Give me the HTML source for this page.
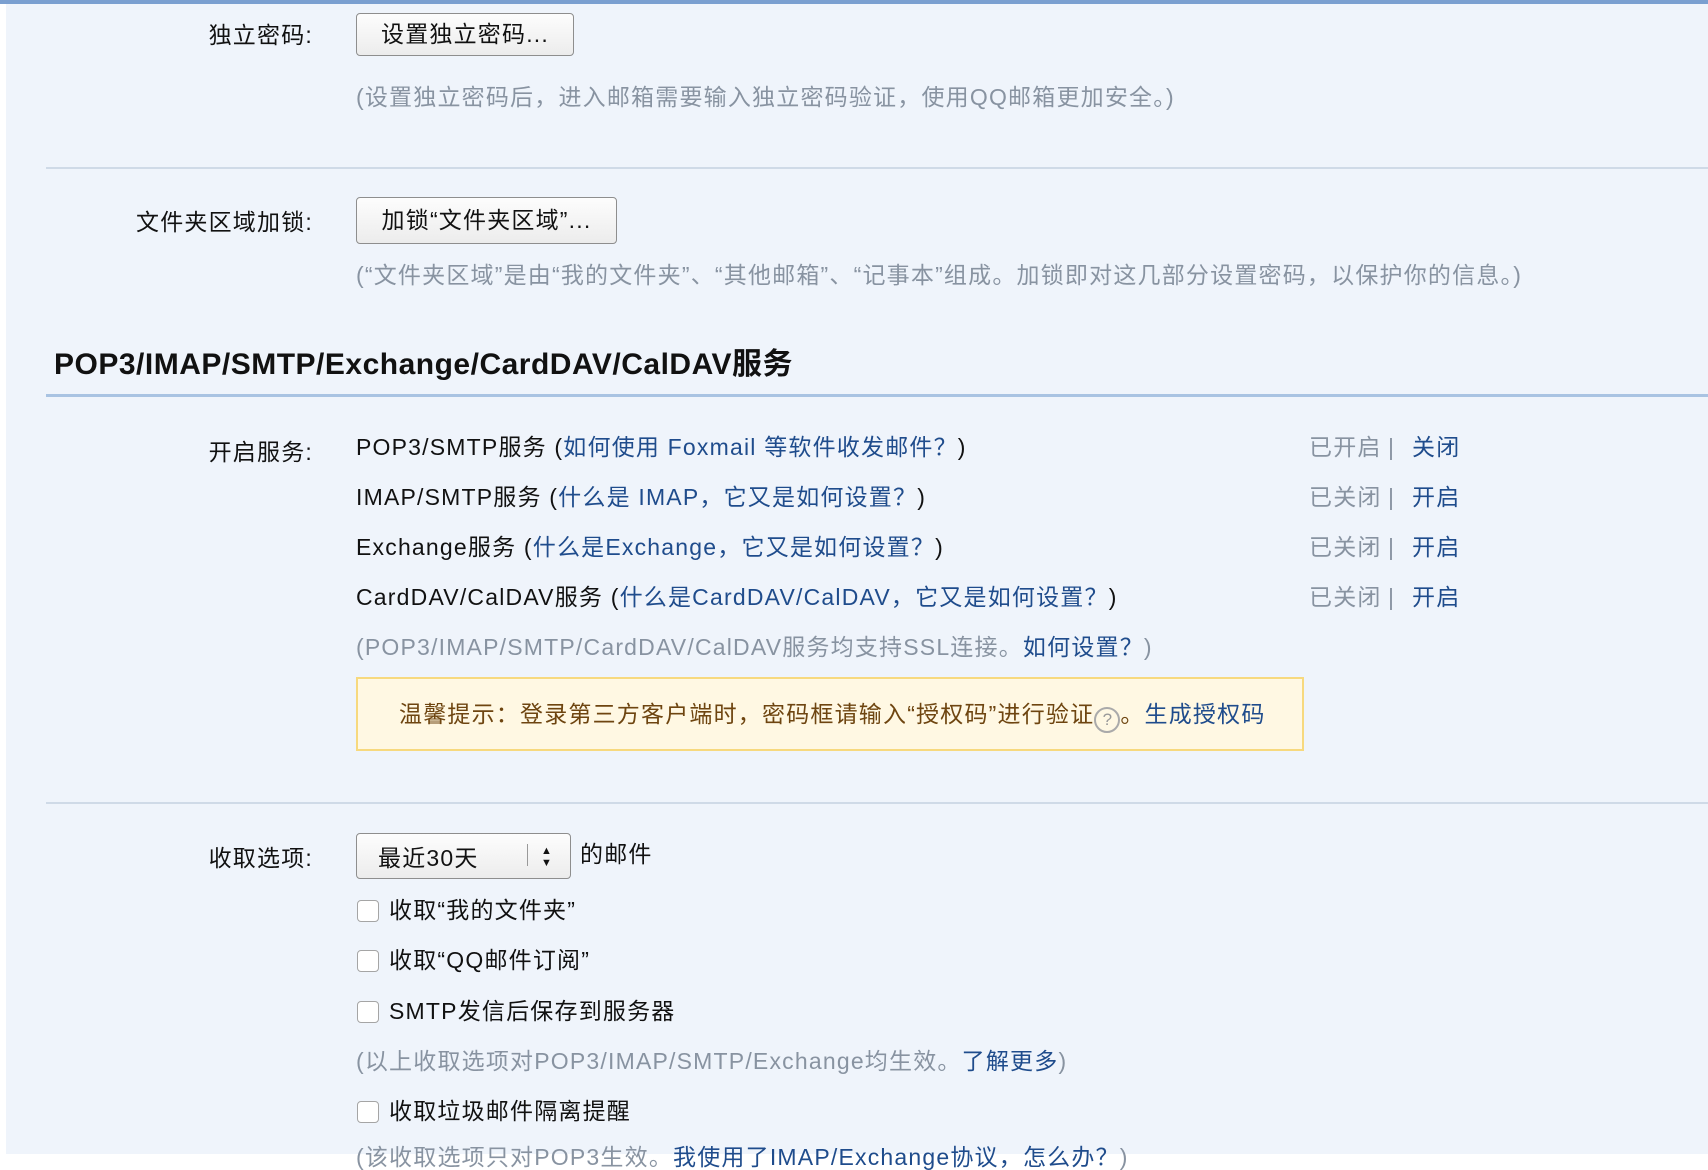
<!DOCTYPE html>
<html><head><meta charset="utf-8"><style>
body{margin:0;width:1708px;height:1154px;overflow:hidden;background:#fff;font-family:"Liberation Sans","Noto Sans CJK SC",sans-serif;font-size:23px;color:#111;position:relative;letter-spacing:1.2px}
#bar{position:absolute;left:0;top:0;width:1708px;height:4px;background:#7a9fd0}
#bg{position:absolute;left:6px;top:4px;right:0;bottom:0;background:#eff4fb}
.a{position:absolute;white-space:nowrap;line-height:24px}
.lbl{text-align:right;width:313px;left:0}
.btn{position:absolute;box-sizing:border-box;border:1px solid #8e8e8e;border-radius:4px;background:linear-gradient(#fdfdfd,#ececec);text-align:center;font-size:23px;line-height:40px}
.g{color:#8893a1}
.l{color:#1f4c8c}
.hr{position:absolute;left:46px;right:0;height:2px;background:#cfdae7}
.cb{position:absolute;left:357px;width:22px;height:22px;box-sizing:border-box;border:1px solid #a5a5a5;border-radius:4px;background:#fff}
</style></head><body>
<div id="bar"></div><div id="bg"></div>

<div class="a lbl" style="top:23px">独立密码:</div>
<div class="btn" style="left:356px;top:13px;width:218px;height:43px">设置独立密码...</div>
<div class="a g" style="left:356px;top:85px">(设置独立密码后，进入邮箱需要输入独立密码验证，使用QQ邮箱更加安全。)</div>
<div class="hr" style="top:167px"></div>

<div class="a lbl" style="top:210px">文件夹区域加锁:</div>
<div class="btn" style="left:356px;top:197px;width:261px;height:47px;line-height:45px">加锁“文件夹区域”...</div>
<div class="a g" style="left:356px;top:263px">(“文件夹区域”是由“我的文件夹”、“其他邮箱”、“记事本”组成。加锁即对这几部分设置密码，以保护你的信息。)</div>

<div class="a" style="left:54px;top:349px;font-size:30px;font-weight:bold;line-height:32px;letter-spacing:0.5px">POP3/IMAP/SMTP/Exchange/CardDAV/CalDAV服务</div>
<div style="position:absolute;left:46px;right:0;top:394px;height:3px;background:#a9c3e2"></div>

<div class="a lbl" style="top:440px">开启服务:</div>
<div class="a" style="left:356px;top:435px">POP3/SMTP服务 (<span class="l">如何使用 Foxmail 等软件收发邮件？</span>)</div>
<div class="a" style="left:356px;top:485px">IMAP/SMTP服务 (<span class="l">什么是 IMAP，它又是如何设置？</span>)</div>
<div class="a" style="left:356px;top:535px">Exchange服务 (<span class="l">什么是Exchange，它又是如何设置？</span>)</div>
<div class="a" style="left:356px;top:585px">CardDAV/CalDAV服务 (<span class="l">什么是CardDAV/CalDAV，它又是如何设置？</span>)</div>
<div class="a g" style="left:356px;top:635px">(POP3/IMAP/SMTP/CardDAV/CalDAV服务均支持SSL连接。<span class="l">如何设置？</span>)</div>
<div class="a g" style="left:1309px;top:435px">已开启</div><div class="a g" style="left:1388px;top:435px">|</div><div class="a l" style="left:1412px;top:435px">关闭</div>
<div class="a g" style="left:1309px;top:485px">已关闭</div><div class="a g" style="left:1388px;top:485px">|</div><div class="a l" style="left:1412px;top:485px">开启</div>
<div class="a g" style="left:1309px;top:535px">已关闭</div><div class="a g" style="left:1388px;top:535px">|</div><div class="a l" style="left:1412px;top:535px">开启</div>
<div class="a g" style="left:1309px;top:585px">已关闭</div><div class="a g" style="left:1388px;top:585px">|</div><div class="a l" style="left:1412px;top:585px">开启</div>

<div style="position:absolute;left:356px;top:677px;width:948px;height:74px;box-sizing:border-box;border:2px solid #f7d97e;background:#fff8e3"></div>
<div class="a" style="left:399px;top:702px;color:#6e4510">温馨提示：登录第三方客户端时，密码框请输入“授权码”进行验证<span style="display:inline-block;width:26px;height:26px;border:2px solid #aaa;border-radius:50%;box-sizing:border-box;font-size:17px;line-height:22px;text-align:center;color:#999;vertical-align:-3px;letter-spacing:0">?</span>。<span class="l">生成授权码</span></div>

<div class="hr" style="top:802px"></div>

<div class="a lbl" style="top:846px">收取选项:</div>
<div class="btn" style="left:356px;top:833px;width:215px;height:46px;text-align:left;padding-left:21px;line-height:48px">最近30天<span style="position:absolute;left:170px;top:10px;width:1px;height:22px;background:#999"></span><span style="position:absolute;left:184px;font-size:11px;line-height:12px;top:11px">▲<br>▼</span></div>
<div class="a" style="left:580px;top:842px">的邮件</div>

<div class="cb" style="top:900px"></div><div class="a" style="left:389px;top:898px">收取“我的文件夹”</div>
<div class="cb" style="top:950px"></div><div class="a" style="left:389px;top:948px">收取“QQ邮件订阅”</div>
<div class="cb" style="top:1001px"></div><div class="a" style="left:389px;top:999px">SMTP发信后保存到服务器</div>
<div class="a g" style="left:356px;top:1049px">(以上收取选项对POP3/IMAP/SMTP/Exchange均生效。<span class="l">了解更多</span>)</div>
<div class="cb" style="top:1101px"></div><div class="a" style="left:389px;top:1099px">收取垃圾邮件隔离提醒</div>
<div class="a g" style="left:356px;top:1145px">(该收取选项只对POP3生效。<span class="l">我使用了IMAP/Exchange协议，怎么办？</span>)</div>
</body></html>
